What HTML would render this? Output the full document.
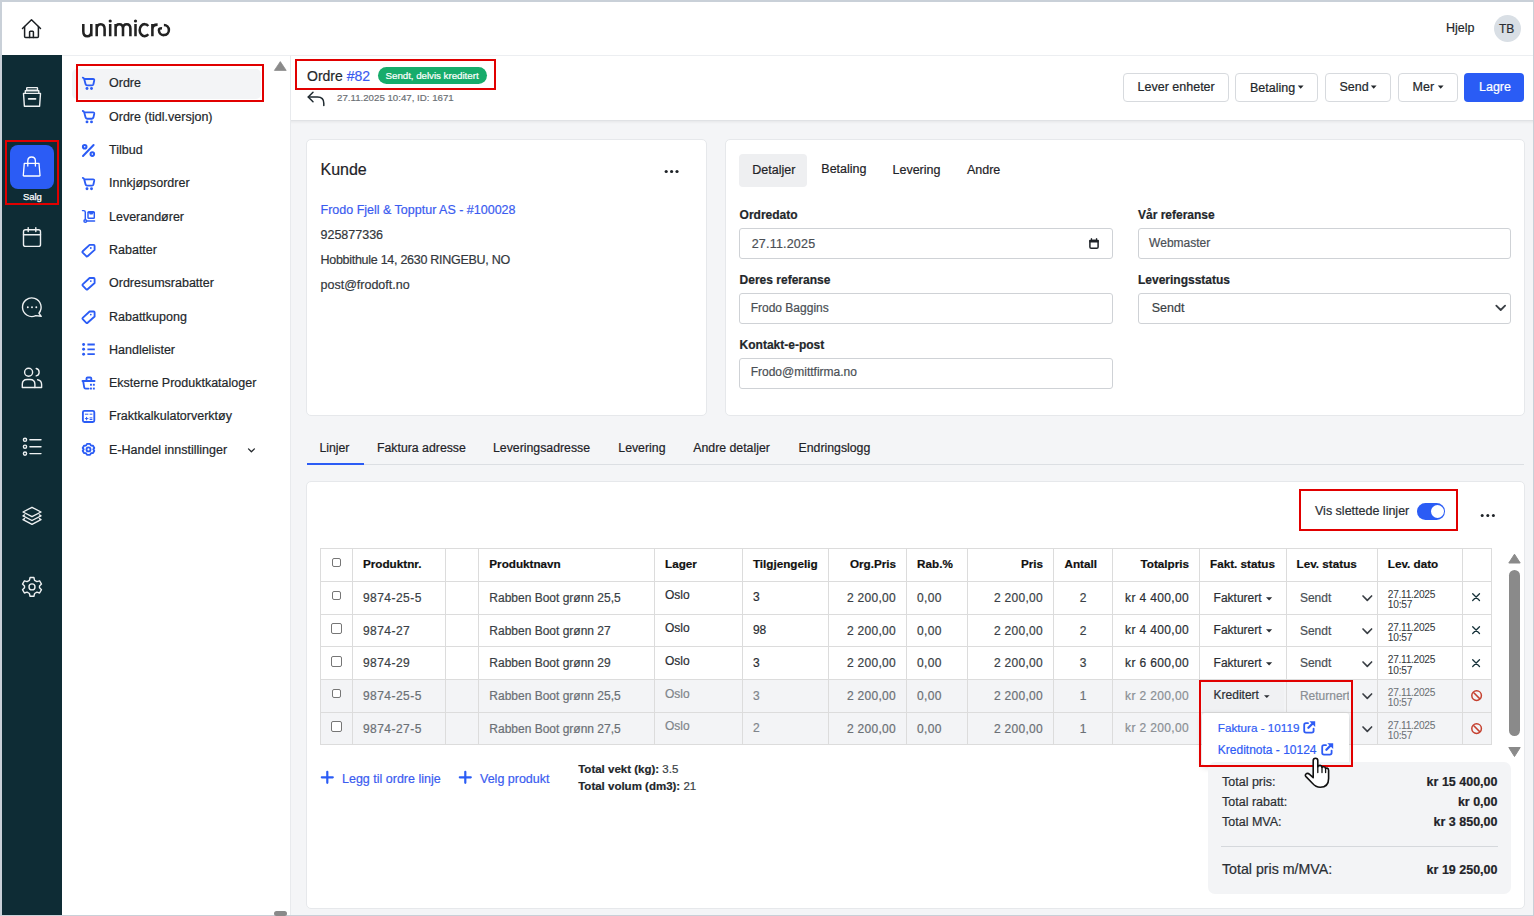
<!DOCTYPE html>
<html><head><meta charset="utf-8">
<style>
*{box-sizing:border-box;margin:0;padding:0}
html,body{width:1534px;height:916px;overflow:hidden;background:#c9d0d8;font-family:"Liberation Sans",sans-serif;color:#23272b}
.a{position:absolute}
#app{position:absolute;left:2px;top:2px;width:1531px;height:912.6px;background:#fff;overflow:hidden}
.t{position:absolute;white-space:nowrap;line-height:1;-webkit-text-stroke:0.2px currentColor}
.rb{position:absolute;border:2px solid #e10000;z-index:5}
svg{position:absolute;overflow:visible}
</style></head><body>
<!-- coordinates below are absolute page coordinates (body) -->
<div id="app"></div>

<!-- top header -->
<div class="a" style="left:2px;top:2px;width:1531px;height:54px;background:#fff;border-bottom:1px solid #eceef1"></div>
<svg style="left:22px;top:19px" width="20" height="20" viewBox="0 0 20 20" fill="none" stroke="#1b1f23" stroke-width="1.5" stroke-linejoin="round" stroke-linecap="round">
  <path d="M0.5 9.5 L9.5 0.8 L18.5 9.5"/><path d="M2.6 7.6 V17.4 Q2.6 18.4 3.6 18.4 H15.4 Q16.4 18.4 16.4 17.4 V7.6"/><path d="M7.6 18.4 V13 Q7.6 12.2 8.4 12.2 H10.6 Q11.4 12.2 11.4 13 V18.4"/>
</svg>
<svg style="left:78px;top:14px" width="100" height="30" viewBox="0 0 100 30" fill="none" stroke="#222" stroke-width="2.55">
<path d="M5.3 10 V17.2 Q5.3 22.2 9.3 22.2 Q13.3 22.2 13.3 17.2 M13.3 10 V22.2"/>
<path d="M18.7 22.2 V10 M18.7 15 Q18.7 10.2 22.7 10.2 Q26.6 10.2 26.6 15 V22.2"/>
<path d="M32.2 10 V22.2 M37.6 22.2 V10 M37.6 14.5 Q37.6 10.2 41.3 10.2 Q45 10.2 45 14.5 V22.2 M45 14.5 Q45 10.2 48.7 10.2 Q52.4 10.2 52.4 14.5 V22.2 M57.5 10 V22.2"/>
<path d="M70.3 12 A5 6 0 1 0 70.3 20.3"/>
<path d="M74.4 22.2 V10 M74.4 15.2 Q74.4 10.6 79.6 10.6"/>
<path d="M85.9 10.9 A5 5.1 0 1 1 80.9 16.2 Q80.9 14 84 14.4"/>
<circle cx="32.2" cy="7" r="1.6" fill="#222" stroke="none"/><circle cx="57.5" cy="7" r="1.6" fill="#222" stroke="none"/>
</svg>
<div class="t" style="left:1446px;top:22px;font-size:12.5px;color:#23272b">Hjelp</div>
<div class="a" style="left:1494px;top:15px;width:27px;height:27px;border-radius:50%;background:#d9dfe5"></div>
<div class="t" style="left:1499px;top:22.5px;font-size:12px;color:#2a2e33">TB</div>

<!-- dark sidebar -->
<div class="a" style="left:2px;top:55px;width:60px;height:859.6px;background:#0e2c35"></div>
<svg style="left:0;top:0" width="64" height="620" viewBox="0 0 64 620" fill="none" stroke="#eef1f2" stroke-width="1.4" stroke-linejoin="round" stroke-linecap="round">
 <rect x="26.7" y="87.6" width="10.8" height="2.6" rx="0.5"/>
 <path d="M25.3 93 V90.7 H38.8 V93"/>
 <path d="M23.5 93.4 H40.5 L39.6 106.3 H24.4 Z"/>
 <path d="M28.6 98.9 H35.6" stroke-width="1.6"/>
 <!-- calendar -->
 <rect x="23.5" y="229.8" width="17" height="16.6" rx="2"/>
 <path d="M23.5 234.8 H40.5 M28.2 227.6 V231.5 M35.8 227.6 V231.5"/>
 <!-- chat -->
 <path d="M38.9 313.2 A9.3 9.3 0 1 0 35.8 315.6 L41.2 316.3 Z"/>
 <circle cx="27.8" cy="307.2" r="0.95" fill="#eef1f2" stroke="none"/><circle cx="32" cy="307.2" r="0.95" fill="#eef1f2" stroke="none"/><circle cx="36.3" cy="307.2" r="0.95" fill="#eef1f2" stroke="none"/>
 <!-- people -->
<g transform="translate(0,0.9)"> <circle cx="28.6" cy="371.3" r="4"/>
 <path d="M36.2 367.6 A3.8 3.8 0 0 1 36.2 375"/>
 <path d="M22.3 386.6 V383.4 Q22.3 378.6 27.2 378.6 H30 Q34.9 378.6 34.9 383.4 V386.6 Z"/>
 <path d="M37.6 378.8 Q41.6 379.6 41.6 383.6 V386.6 H34.9"/></g>
 <!-- list -->
 <circle cx="25" cy="439.8" r="1.6"/><circle cx="25" cy="446.7" r="1.6"/><circle cx="25" cy="453.6" r="1.6"/>
 <path d="M29.9 439.8 H41 M29.9 446.7 H41 M29.9 453.6 H41"/>
 <!-- layers -->
 <path d="M32 507.3 L41 512 L32 516.7 L23 512 Z"/>
 <path d="M24.6 514.9 L23 515.8 L32 520.5 L41 515.8 L39.4 514.9"/>
 <path d="M24.6 518.7 L23 519.6 L32 524.3 L41 519.6 L39.4 518.7"/>
 <!-- gear -->
 <circle cx="32" cy="586.9" r="3"/>
 <path d="M30.1 577.5 H33.9 L34.6 580.3 L36.9 581.6 L39.6 580.8 L41.5 584.1 L39.5 586.1 V587.7 L41.5 589.7 L39.6 593 L36.9 592.2 L34.6 593.5 L33.9 596.3 H30.1 L29.4 593.5 L27.1 592.2 L24.4 593 L22.5 589.7 L24.5 587.7 V586.1 L22.5 584.1 L24.4 580.8 L27.1 581.6 L29.4 580.3 Z"/>
</svg>
<div class="a" style="left:10px;top:145px;width:44px;height:44px;border-radius:8px;background:#2b5cf5"></div>
<svg style="left:0;top:0" width="64" height="200" viewBox="0 0 64 200" fill="none" stroke="#fff" stroke-width="1.3" stroke-linejoin="round" stroke-linecap="round">
 <path d="M24.3 163.3 H39 L40 175.2 Q40.1 176 39.3 176 H24 Q23.2 176 23.3 175.2 Z"/>
 <path d="M27.8 166 V161 Q27.8 157 31.6 157 Q35.4 157 35.4 161 V166"/>
</svg>
<div class="t" style="left:23px;top:192px;font-size:9.5px;color:#fff;letter-spacing:-0.1px;-webkit-text-stroke:0.25px #fff">Salg</div>
<div class="rb" style="left:5px;top:140px;width:54px;height:65px"></div>

<!-- secondary menu -->
<div class="a" style="left:62px;top:55px;width:229px;height:859.6px;background:#fff;border-right:1px solid #e8eaed;border-top:1px solid #eceef1"></div>
<div class="a" style="left:72px;top:69px;width:189px;height:30px;border-radius:5px;background:#f3f4f6"></div>
<div class="t" style="left:109px;top:76.97px;font-size:12.5px;color:#23272b">Ordre</div>
<div class="t" style="left:109px;top:110.57px;font-size:12.5px;color:#23272b">Ordre (tidl.versjon)</div>
<div class="t" style="left:109px;top:143.67px;font-size:12.5px;color:#23272b">Tilbud</div>
<div class="t" style="left:109px;top:176.97px;font-size:12.5px;color:#23272b">Innkjøpsordrer</div>
<div class="t" style="left:109px;top:210.77px;font-size:12.5px;color:#23272b">Leverandører</div>
<div class="t" style="left:109px;top:243.97px;font-size:12.5px;color:#23272b">Rabatter</div>
<div class="t" style="left:109px;top:277.17px;font-size:12.5px;color:#23272b">Ordresumsrabatter</div>
<div class="t" style="left:109px;top:310.77px;font-size:12.5px;color:#23272b">Rabattkupong</div>
<div class="t" style="left:109px;top:343.87px;font-size:12.5px;color:#23272b">Handlelister</div>
<div class="t" style="left:109px;top:377.07px;font-size:12.5px;color:#23272b">Eksterne Produktkataloger</div>
<div class="t" style="left:109px;top:410.17px;font-size:12.5px;color:#23272b">Fraktkalkulatorverktøy</div>
<div class="t" style="left:109px;top:443.67px;font-size:12.5px;color:#23272b">E-Handel innstillinger</div>
<svg style="left:0;top:0" width="300" height="916" viewBox="0 0 300 916" fill="none" stroke="#2b5cf5" stroke-width="1.85" stroke-linejoin="round" stroke-linecap="round">
 <g id="cart"><path d="M82.8 77.6 Q83.9 77.8 84.2 79 L85.6 84.2 Q85.9 85.3 87 85.3 H92 Q93.1 85.3 93.4 84.2 L94.2 80.6 Q94.5 79 93 79 H84.4"/><circle cx="87" cy="88.5" r="1.45" fill="#2b5cf5" stroke="none"/><circle cx="91.5" cy="88.5" r="1.45" fill="#2b5cf5" stroke="none"/></g>
 <use href="#cart" transform="translate(0,33.4)"/>
 <use href="#cart" transform="translate(0,100.3)"/>
 <!-- percent -->
 <circle cx="84.7" cy="146.7" r="1.8" stroke-width="2"/><circle cx="92.3" cy="154.1" r="1.8" stroke-width="2"/><path d="M93.6 145 L83 156" stroke-width="2"/>
 <!-- trolley -->
 <g stroke-width="1.45"><path d="M82.5 210.6 H83.6 Q85.3 210.6 85.3 212.3 V219.6"/><circle cx="85.3" cy="221" r="1.35"/><path d="M86.8 221 H94.6"/>
 <rect x="88" y="211.7" width="6.3" height="6.5" rx="0.8"/><path d="M88.3 212.6 H94 M90 212.4 V213.8 H92.3 V212.4" stroke-width="1.3"/></g>
 <!-- tags -->
 <g id="tag"><path d="M89.6 244.9 H93.6 Q94.6 244.9 94.6 245.9 V249.9 L87.6 256.2 Q87 256.8 86.3 256.2 L82.7 252.6 Q82.1 251.9 82.7 251.3 Z"/><circle cx="90.8" cy="248" r="0.9" fill="#2b5cf5" stroke="none"/></g>
 <use href="#tag" transform="translate(0,33.1)"/>
 <use href="#tag" transform="translate(0,66.6)"/>
 <!-- list -->
 <circle cx="83.6" cy="344.5" r="1.45" fill="#2b5cf5" stroke="none"/><circle cx="83.6" cy="349.3" r="1.45" fill="#2b5cf5" stroke="none"/><circle cx="83.6" cy="354.2" r="1.45" fill="#2b5cf5" stroke="none"/>
 <path d="M87.4 344.5 H94.8 M87.4 349.3 H94.8 M87.4 354.2 H94.8" stroke-width="1.8" stroke-linecap="butt"/>
 <!-- basket -->
 <path d="M86.5 380.8 V378.6 Q86.5 377.5 87.6 377.5 H90.2 Q91.3 377.5 91.3 378.6 V380.8"/>
 <path d="M82.5 381 H94.6 M83.2 381.4 L84.2 387.4 Q84.4 388.6 85.6 388.6 H88.6"/>
 <rect x="90" y="383.8" width="1.9" height="1.9" fill="#2b5cf5" stroke="none"/><rect x="92.9" y="383.8" width="1.9" height="1.9" fill="#2b5cf5" stroke="none"/><rect x="90" y="387.6" width="1.9" height="1.9" fill="#2b5cf5" stroke="none"/><rect x="92.9" y="387.6" width="1.9" height="1.9" fill="#2b5cf5" stroke="none"/>
 <!-- calculator -->
 <rect x="82.9" y="410.8" width="11.4" height="11.2" rx="1.5"/>
 <path d="M85.3 414.2 H88 M90 414.2 H92 M85.3 418.6 H88 M86.6 417.3 V419.9 M90 417.9 H92 M90 419.5 H92" stroke-width="1"/>
 <!-- gear -->
 <circle cx="88.5" cy="449.4" r="2"/>
 <path d="M87 443.9 H90 L91 445.6 L93 445.7 L94.3 448 L93.3 449.4 L94.3 450.8 L93 453.1 L91 453.2 L90 454.9 H87 L86 453.2 L84 453.1 L82.7 450.8 L83.7 449.4 L82.7 448 L84 445.7 L86 445.6 Z"/>
 <path d="M248.5 448.9 L251.4 451.8 L254.4 448.9" stroke="#23272b" stroke-width="1.3"/>
</svg>
<svg style="left:274px;top:61px" width="13" height="10" viewBox="0 0 13 10"><path d="M6.3 0.6 L12.2 9.4 H0.4 Z" fill="#8a8a8a" stroke="#8a8a8a" stroke-width="0.8" stroke-linejoin="round"/></svg>
<div class="a" style="left:274px;top:911px;width:13px;height:5px;border-radius:3px;background:#8a8a8a"></div>
<div class="rb" style="left:76px;top:64px;width:188px;height:38px"></div>


<!-- page header -->
<div class="a" style="left:291px;top:56px;width:1242px;height:65px;background:#fff;border-bottom:1px solid #e0e2e5"></div>

<div class="rb" style="left:295px;top:59px;width:201px;height:31px"></div>
<div class="t" style="left:307px;top:69.27px;font-size:14px;color:#23272b;">Ordre <span style="color:#3b5bf0">#82</span></div>
<div class="a" style="left:378px;top:67px;width:109px;height:17px;border-radius:9px;background:#17ac6b"></div>
<div class="t" style="left:385.5px;top:71.12px;font-size:9.8px;color:#fff;letter-spacing:-0.05px">Sendt, delvis kreditert</div>
<div class="t" style="left:337px;top:92.93px;font-size:9.7px;color:#6b7075;">27.11.2025 10:47, ID: 1671</div>
<svg style="left:307px;top:91px" width="20" height="16" viewBox="0 0 20 16" fill="none" stroke="#1f2a30" stroke-width="1.5" stroke-linecap="round" stroke-linejoin="round"><path d="M6 1.2 L1.2 6 L6 10.8"/><path d="M1.4 6 H10.5 Q16.8 6 16.8 12.3 V14.4"/></svg>
<div class="a" style="left:1123px;top:73px;width:106px;height:29px;border:1px solid #d7dade;border-radius:4px;background:#fff"></div>
<div class="t" style="left:1137.6px;top:80.57px;font-size:12.5px;color:#23272b;">Lever enheter</div>
<div class="a" style="left:1235px;top:73px;width:83px;height:29px;border:1px solid #d7dade;border-radius:4px;background:#fff"></div>
<div class="t" style="left:1250px;top:81.57px;font-size:12.5px;color:#23272b;">Betaling</div>
<svg style="left:0;top:0" width="1534" height="120"><path d="M1297.8 85.4 h5.8 l-2.9 3.3 z" fill="#23272b"/></svg>
<div class="a" style="left:1325px;top:73px;width:66px;height:29px;border:1px solid #d7dade;border-radius:4px;background:#fff"></div>
<div class="t" style="left:1339.4px;top:80.57px;font-size:12.5px;color:#23272b;">Send</div>
<svg style="left:0;top:0" width="1534" height="120"><path d="M1370.8 85.4 h5.8 l-2.9 3.3 z" fill="#23272b"/></svg>
<div class="a" style="left:1398px;top:73px;width:60px;height:29px;border:1px solid #d7dade;border-radius:4px;background:#fff"></div>
<div class="t" style="left:1412.6px;top:80.57px;font-size:12.5px;color:#23272b;">Mer</div>
<svg style="left:0;top:0" width="1534" height="120"><path d="M1437.8 85.4 h5.8 l-2.9 3.3 z" fill="#23272b"/></svg>
<div class="a" style="left:1464px;top:73px;width:60px;height:29px;border-radius:4px;background:#2a5cf5"></div>
<div class="t" style="left:1479px;top:80.57px;font-size:12.5px;color:#fff;">Lagre</div>
<!-- content bg -->
<div class="a" style="left:291px;top:121px;width:1242px;height:793.6px;background:#f4f5f7"></div>
<div class="a" style="left:291px;top:121px;width:1242px;height:3px;background:linear-gradient(rgba(0,0,0,.05),rgba(0,0,0,0))"></div>

<!-- cards -->
<div class="a" style="left:306px;top:139px;width:401px;height:277px;background:#fff;border:1px solid #e6e8eb;border-radius:5px"></div>
<div class="a" style="left:725px;top:139px;width:800px;height:277px;background:#fff;border:1px solid #e6e8eb;border-radius:5px"></div>
<div class="a" style="left:306px;top:481px;width:1219px;height:428px;background:#fff;border:1px solid #e6e8eb;border-radius:5px"></div>
<!-- kunde card content -->
<div class="t" style="left:320.5px;top:161.51px;font-size:16px;color:#1f2328;">Kunde</div>
<svg style="left:664px;top:169px" width="16" height="5"><circle cx="2.2" cy="2.5" r="1.6" fill="#1f2328"/><circle cx="7.6" cy="2.5" r="1.6" fill="#1f2328"/><circle cx="13" cy="2.5" r="1.6" fill="#1f2328"/></svg>
<div class="t" style="left:320.5px;top:203.97px;font-size:12.5px;color:#3b5cf0;">Frodo Fjell &amp; Topptur AS - #100028</div>
<div class="t" style="left:320.5px;top:229.17px;font-size:12.5px;color:#33373c;">925877336</div>
<div class="t" style="left:320.5px;top:254.27px;font-size:12.5px;letter-spacing:-0.28px;color:#33373c;">Hobbithule 14, 2630 RINGEBU, NO</div>
<div class="t" style="left:320.5px;top:279.27px;font-size:12.5px;color:#33373c;">post@frodoft.no</div>

<!-- detaljer card -->
<div class="a" style="left:739px;top:154px;width:68px;height:33px;border-radius:4px;background:#eeeff1"></div>
<div class="t" style="left:752.3px;top:164.17px;font-size:12.5px;color:#1f2328;">Detaljer</div>
<div class="t" style="left:821.3px;top:163.17px;font-size:12.5px;color:#1f2328;">Betaling</div>
<div class="t" style="left:892.5px;top:164.17px;font-size:12.5px;color:#1f2328;">Levering</div>
<div class="t" style="left:966.9px;top:164.17px;font-size:12.5px;color:#1f2328;">Andre</div>
<div class="t" style="left:739.6px;top:209.13px;font-size:12px;color:#23272b;font-weight:bold">Ordredato</div>
<div class="t" style="left:739.6px;top:274.03px;font-size:12px;color:#23272b;font-weight:bold">Deres referanse</div>
<div class="t" style="left:739.6px;top:338.93px;font-size:12px;color:#23272b;font-weight:bold">Kontakt-e-post</div>
<div class="t" style="left:1138px;top:209.13px;font-size:12px;color:#23272b;font-weight:bold">Vår referanse</div>
<div class="t" style="left:1138px;top:274.03px;font-size:12px;color:#23272b;font-weight:bold">Leveringsstatus</div>
<div class="a" style="left:739px;top:228px;width:374px;height:31px;border:1px solid #cfd2d6;border-radius:3px;background:#fff"></div>
<div class="a" style="left:739px;top:293px;width:374px;height:31px;border:1px solid #cfd2d6;border-radius:3px;background:#fff"></div>
<div class="a" style="left:739px;top:358px;width:374px;height:31px;border:1px solid #cfd2d6;border-radius:3px;background:#fff"></div>
<div class="a" style="left:1138px;top:228px;width:373px;height:31px;border:1px solid #cfd2d6;border-radius:3px;background:#fff"></div>
<div class="a" style="left:1138px;top:293px;width:373px;height:31px;border:1px solid #cfd2d6;border-radius:3px;background:#fff"></div>
<div class="t" style="left:751.7px;top:237.57px;font-size:12.5px;color:#4a4f55;letter-spacing:0.2px">27.11.2025</div>
<div class="t" style="left:750.7px;top:301.63px;font-size:12px;color:#4a4f55;">Frodo Baggins</div>
<div class="t" style="left:750.7px;top:366.43px;font-size:12px;color:#4a4f55;">Frodo@mittfirma.no</div>
<div class="t" style="left:1149.1px;top:237.03px;font-size:12px;color:#4a4f55;">Webmaster</div>
<div class="t" style="left:1151.7px;top:301.57px;font-size:12.5px;color:#3a3f45;">Sendt</div>
<svg style="left:0;top:0" width="1534" height="400" fill="none">
 <rect x="1089.9" y="240.4" width="8.2" height="7.8" rx="1.3" stroke="#1f2328" stroke-width="1.5"/><rect x="1089.2" y="239.8" width="9.6" height="2.6" rx="0.8" fill="#1f2328"/><rect x="1090.8" y="238.2" width="1.3" height="2" fill="#1f2328"/><rect x="1095.9" y="238.2" width="1.3" height="2" fill="#1f2328"/>
 <path d="M1496.3 305.6 L1500.7 310 L1505.1 305.6" stroke="#3a3f45" stroke-width="1.8" stroke-linecap="round" stroke-linejoin="round"/>
</svg>


<!--TABLE-->

<!-- lower tabs -->
<div class="t" style="left:319.40px;top:441.89px;font-size:12.3px;color:#1f2328;">Linjer</div>
<div class="t" style="left:377.00px;top:441.89px;font-size:12.3px;color:#1f2328;">Faktura adresse</div>
<div class="t" style="left:493.00px;top:441.89px;font-size:12.3px;color:#1f2328;">Leveringsadresse</div>
<div class="t" style="left:618.30px;top:441.89px;font-size:12.3px;color:#1f2328;">Levering</div>
<div class="t" style="left:693.30px;top:441.89px;font-size:12.3px;color:#1f2328;">Andre detaljer</div>
<div class="t" style="left:798.50px;top:441.89px;font-size:12.3px;color:#1f2328;">Endringslogg</div>
<div class="a" style="left:307px;top:464px;width:1217px;height:1px;background:#dcdfe3"></div>
<div class="a" style="left:307px;top:463px;width:57px;height:2px;background:#2b5cf5"></div>

<!-- toggle -->
<div class="t" style="left:1315.00px;top:504.87px;font-size:12.5px;color:#2a2e33;">Vis slettede linjer</div>
<div class="a" style="left:1417px;top:503px;width:28px;height:17px;border-radius:9px;background:#2b5cf5"></div>
<div class="a" style="left:1431px;top:505px;width:13px;height:13px;border-radius:50%;background:#fff"></div>
<div class="rb" style="left:1299px;top:489px;width:159px;height:42px"></div>
<svg style="left:1480px;top:513px" width="16" height="5"><circle cx="2.2" cy="2.5" r="1.5" fill="#1f2328"/><circle cx="7.8" cy="2.5" r="1.5" fill="#1f2328"/><circle cx="13.4" cy="2.5" r="1.5" fill="#1f2328"/></svg>

<!-- table -->
<div class="a" style="left:320px;top:679px;width:1171px;height:65px;background:#f3f4f6"></div>
<svg style="left:0;top:0" width="1534" height="916" shape-rendering="crispEdges"><rect x="320" y="548" width="1" height="197" fill="#dcdcdc"/><rect x="352" y="548" width="1" height="197" fill="#dcdcdc"/><rect x="445" y="548" width="1" height="197" fill="#dcdcdc"/><rect x="478" y="548" width="1" height="197" fill="#dcdcdc"/><rect x="654" y="548" width="1" height="197" fill="#dcdcdc"/><rect x="742" y="548" width="1" height="197" fill="#dcdcdc"/><rect x="828" y="548" width="1" height="197" fill="#dcdcdc"/><rect x="906" y="548" width="1" height="197" fill="#dcdcdc"/><rect x="967" y="548" width="1" height="197" fill="#dcdcdc"/><rect x="1053" y="548" width="1" height="197" fill="#dcdcdc"/><rect x="1112" y="548" width="1" height="197" fill="#dcdcdc"/><rect x="1199" y="548" width="1" height="197" fill="#dcdcdc"/><rect x="1286" y="548" width="1" height="197" fill="#dcdcdc"/><rect x="1377" y="548" width="1" height="197" fill="#dcdcdc"/><rect x="1462" y="548" width="1" height="197" fill="#dcdcdc"/><rect x="1491" y="548" width="1" height="197" fill="#dcdcdc"/><rect x="320" y="548" width="1172" height="1" fill="#dcdcdc"/><rect x="320" y="581" width="1172" height="1" fill="#dcdcdc"/><rect x="320" y="614" width="1172" height="1" fill="#dcdcdc"/><rect x="320" y="646" width="1172" height="1" fill="#dcdcdc"/><rect x="320" y="679" width="1172" height="1" fill="#dcdcdc"/><rect x="320" y="712" width="1172" height="1" fill="#dcdcdc"/><rect x="320" y="744" width="1172" height="1" fill="#dcdcdc"/></svg>
<div class="a" style="left:332px;top:558px;width:9px;height:9px;border:1px solid #767676;border-radius:2px;background:#fff"></div>
<div class="a" style="left:332px;top:591px;width:9px;height:9px;border:1px solid #767676;border-radius:2px;background:#fff"></div>
<div class="a" style="left:331px;top:623px;width:10.5px;height:10.5px;border:1px solid #767676;border-radius:2px;background:#fff"></div>
<div class="a" style="left:331px;top:656px;width:10.5px;height:10.5px;border:1px solid #767676;border-radius:2px;background:#fff"></div>
<div class="a" style="left:332px;top:689px;width:9px;height:9px;border:1px solid #767676;border-radius:2px;background:#fff"></div>
<div class="a" style="left:331px;top:721.4px;width:10.5px;height:10.5px;border:1px solid #767676;border-radius:2px;background:#fff"></div>
<div class="t" style="left:363.00px;top:557.97px;font-size:11.7px;color:#111;font-weight:bold">Produktnr.</div>
<div class="t" style="left:489.30px;top:557.97px;font-size:11.7px;color:#111;font-weight:bold">Produktnavn</div>
<div class="t" style="left:665.10px;top:557.97px;font-size:11.7px;color:#111;font-weight:bold">Lager</div>
<div class="t" style="left:752.90px;top:557.97px;font-size:11.7px;color:#111;font-weight:bold">Tilgjengelig</div>
<div class="t" style="right:638.00px;top:557.97px;font-size:11.7px;color:#111;text-align:right;font-weight:bold">Org.Pris</div>
<div class="t" style="left:917.10px;top:557.97px;font-size:11.7px;color:#111;font-weight:bold">Rab.%</div>
<div class="t" style="right:491.00px;top:557.97px;font-size:11.7px;color:#111;text-align:right;font-weight:bold">Pris</div>
<div class="t" style="left:1064.50px;top:557.97px;font-size:11.7px;color:#111;font-weight:bold">Antall</div>
<div class="t" style="right:345.00px;top:557.97px;font-size:11.7px;color:#111;text-align:right;font-weight:bold">Totalpris</div>
<div class="t" style="left:1210.00px;top:557.97px;font-size:11.7px;color:#111;font-weight:bold">Fakt. status</div>
<div class="t" style="left:1296.60px;top:557.97px;font-size:11.7px;color:#111;font-weight:bold">Lev. status</div>
<div class="t" style="left:1387.80px;top:557.97px;font-size:11.7px;color:#111;font-weight:bold">Lev. dato</div>
<div class="t" style="left:363.00px;top:592.03px;font-size:12px;color:#3a3f45;letter-spacing:0.45px">9874-25-5</div>
<div class="t" style="left:489.30px;top:592.03px;font-size:12px;color:#3a3f45;">Rabben Boot grønn 25,5</div>
<div class="t" style="left:665.00px;top:589.43px;font-size:12px;color:#2a2e33;">Oslo</div>
<div class="t" style="left:752.90px;top:591.43px;font-size:12px;color:#2a2e33;">3</div>
<div class="t" style="right:638.00px;top:592.03px;font-size:12px;color:#3a3f45;text-align:right;letter-spacing:0.3px">2 200,00</div>
<div class="t" style="left:917.10px;top:592.03px;font-size:12px;color:#3a3f45;letter-spacing:0.3px">0,00</div>
<div class="t" style="right:491.00px;top:592.03px;font-size:12px;color:#3a3f45;text-align:right;letter-spacing:0.3px">2 200,00</div>
<div class="t" style="left:1033.00px;width:100px;text-align:center;top:592.03px;font-size:12px;color:#3a3f45;">2</div>
<div class="t" style="right:345.00px;top:591.53px;font-size:12px;color:#2a2e33;text-align:right;letter-spacing:0.35px">kr 4 400,00</div>
<div class="t" style="left:1387.80px;top:590.07px;font-size:10.2px;color:#33383d;letter-spacing:-0.3px;-webkit-text-stroke:0.05px currentColor">27.11.2025</div>
<div class="t" style="left:1387.80px;top:600.37px;font-size:10.2px;color:#33383d;letter-spacing:-0.2px;-webkit-text-stroke:0.05px currentColor">10:57</div>
<div class="t" style="left:1213.60px;top:591.53px;font-size:12px;color:#2a2e33;">Fakturert</div>
<svg style="left:1265.8px;top:596.7px" width="7" height="5"><path d="M0 0.3 h6.2 l-3.1 3.1 z" fill="#2a2e33"/></svg>
<div class="t" style="left:1299.90px;top:592.03px;font-size:12px;color:#4a4f55;">Sendt</div>
<svg style="left:1472.2px;top:593.4px" width="10" height="10" fill="none" stroke="#16323a" stroke-width="1.3" stroke-linecap="round"><path d="M0.7 0.7 L7.5 7.5 M7.5 0.7 L0.7 7.5"/></svg>
<svg style="left:1362px;top:595.2px" width="12" height="8" fill="none" stroke="#3a3f45" stroke-width="1.65" stroke-linecap="round" stroke-linejoin="round"><path d="M1 1 L5.3 5.3 L9.6 1"/></svg>
<div class="t" style="left:363.00px;top:624.73px;font-size:12px;color:#3a3f45;letter-spacing:0.45px">9874-27</div>
<div class="t" style="left:489.30px;top:624.73px;font-size:12px;color:#3a3f45;">Rabben Boot grønn 27</div>
<div class="t" style="left:665.00px;top:622.13px;font-size:12px;color:#2a2e33;">Oslo</div>
<div class="t" style="left:752.90px;top:624.13px;font-size:12px;color:#2a2e33;">98</div>
<div class="t" style="right:638.00px;top:624.73px;font-size:12px;color:#3a3f45;text-align:right;letter-spacing:0.3px">2 200,00</div>
<div class="t" style="left:917.10px;top:624.73px;font-size:12px;color:#3a3f45;letter-spacing:0.3px">0,00</div>
<div class="t" style="right:491.00px;top:624.73px;font-size:12px;color:#3a3f45;text-align:right;letter-spacing:0.3px">2 200,00</div>
<div class="t" style="left:1033.00px;width:100px;text-align:center;top:624.73px;font-size:12px;color:#3a3f45;">2</div>
<div class="t" style="right:345.00px;top:624.23px;font-size:12px;color:#2a2e33;text-align:right;letter-spacing:0.35px">kr 4 400,00</div>
<div class="t" style="left:1387.80px;top:622.77px;font-size:10.2px;color:#33383d;letter-spacing:-0.3px;-webkit-text-stroke:0.05px currentColor">27.11.2025</div>
<div class="t" style="left:1387.80px;top:633.07px;font-size:10.2px;color:#33383d;letter-spacing:-0.2px;-webkit-text-stroke:0.05px currentColor">10:57</div>
<div class="t" style="left:1213.60px;top:624.23px;font-size:12px;color:#2a2e33;">Fakturert</div>
<svg style="left:1265.8px;top:629.4px" width="7" height="5"><path d="M0 0.3 h6.2 l-3.1 3.1 z" fill="#2a2e33"/></svg>
<div class="t" style="left:1299.90px;top:624.73px;font-size:12px;color:#4a4f55;">Sendt</div>
<svg style="left:1472.2px;top:626.1px" width="10" height="10" fill="none" stroke="#16323a" stroke-width="1.3" stroke-linecap="round"><path d="M0.7 0.7 L7.5 7.5 M7.5 0.7 L0.7 7.5"/></svg>
<svg style="left:1362px;top:627.9px" width="12" height="8" fill="none" stroke="#3a3f45" stroke-width="1.65" stroke-linecap="round" stroke-linejoin="round"><path d="M1 1 L5.3 5.3 L9.6 1"/></svg>
<div class="t" style="left:363.00px;top:657.43px;font-size:12px;color:#3a3f45;letter-spacing:0.45px">9874-29</div>
<div class="t" style="left:489.30px;top:657.43px;font-size:12px;color:#3a3f45;">Rabben Boot grønn 29</div>
<div class="t" style="left:665.00px;top:654.83px;font-size:12px;color:#2a2e33;">Oslo</div>
<div class="t" style="left:752.90px;top:656.83px;font-size:12px;color:#2a2e33;">3</div>
<div class="t" style="right:638.00px;top:657.43px;font-size:12px;color:#3a3f45;text-align:right;letter-spacing:0.3px">2 200,00</div>
<div class="t" style="left:917.10px;top:657.43px;font-size:12px;color:#3a3f45;letter-spacing:0.3px">0,00</div>
<div class="t" style="right:491.00px;top:657.43px;font-size:12px;color:#3a3f45;text-align:right;letter-spacing:0.3px">2 200,00</div>
<div class="t" style="left:1033.00px;width:100px;text-align:center;top:657.43px;font-size:12px;color:#3a3f45;">3</div>
<div class="t" style="right:345.00px;top:656.93px;font-size:12px;color:#2a2e33;text-align:right;letter-spacing:0.35px">kr 6 600,00</div>
<div class="t" style="left:1387.80px;top:655.47px;font-size:10.2px;color:#33383d;letter-spacing:-0.3px;-webkit-text-stroke:0.05px currentColor">27.11.2025</div>
<div class="t" style="left:1387.80px;top:665.77px;font-size:10.2px;color:#33383d;letter-spacing:-0.2px;-webkit-text-stroke:0.05px currentColor">10:57</div>
<div class="t" style="left:1213.60px;top:656.93px;font-size:12px;color:#2a2e33;">Fakturert</div>
<svg style="left:1265.8px;top:662.1px" width="7" height="5"><path d="M0 0.3 h6.2 l-3.1 3.1 z" fill="#2a2e33"/></svg>
<div class="t" style="left:1299.90px;top:657.43px;font-size:12px;color:#4a4f55;">Sendt</div>
<svg style="left:1472.2px;top:658.8px" width="10" height="10" fill="none" stroke="#16323a" stroke-width="1.3" stroke-linecap="round"><path d="M0.7 0.7 L7.5 7.5 M7.5 0.7 L0.7 7.5"/></svg>
<svg style="left:1362px;top:660.6px" width="12" height="8" fill="none" stroke="#3a3f45" stroke-width="1.65" stroke-linecap="round" stroke-linejoin="round"><path d="M1 1 L5.3 5.3 L9.6 1"/></svg>
<div class="t" style="left:363.00px;top:690.13px;font-size:12px;color:#6b7075;letter-spacing:0.45px">9874-25-5</div>
<div class="t" style="left:489.30px;top:690.13px;font-size:12px;color:#6b7075;">Rabben Boot grønn 25,5</div>
<div class="t" style="left:665.00px;top:687.53px;font-size:12px;color:#80858a;">Oslo</div>
<div class="t" style="left:752.90px;top:689.53px;font-size:12px;color:#80858a;">3</div>
<div class="t" style="right:638.00px;top:690.13px;font-size:12px;color:#6b7075;text-align:right;letter-spacing:0.3px">2 200,00</div>
<div class="t" style="left:917.10px;top:690.13px;font-size:12px;color:#6b7075;letter-spacing:0.3px">0,00</div>
<div class="t" style="right:491.00px;top:690.13px;font-size:12px;color:#6b7075;text-align:right;letter-spacing:0.3px">2 200,00</div>
<div class="t" style="left:1033.00px;width:100px;text-align:center;top:690.13px;font-size:12px;color:#6b7075;">1</div>
<div class="t" style="right:345.00px;top:689.63px;font-size:12px;color:#8a8f94;text-align:right;letter-spacing:0.35px">kr 2 200,00</div>
<div class="t" style="left:1387.80px;top:688.17px;font-size:10.2px;color:#6b7075;letter-spacing:-0.3px;-webkit-text-stroke:0.05px currentColor">27.11.2025</div>
<div class="t" style="left:1387.80px;top:698.47px;font-size:10.2px;color:#6b7075;letter-spacing:-0.2px;-webkit-text-stroke:0.05px currentColor">10:57</div>
<svg style="left:1470.5px;top:690.1px" width="12" height="12" fill="none" stroke="#c5402f" stroke-width="1.5"><circle cx="5.6" cy="5.6" r="4.8"/><path d="M2.3 2.3 L8.9 8.9"/></svg>
<svg style="left:1362px;top:693.3px" width="12" height="8" fill="none" stroke="#3a3f45" stroke-width="1.65" stroke-linecap="round" stroke-linejoin="round"><path d="M1 1 L5.3 5.3 L9.6 1"/></svg>
<div class="t" style="left:363.00px;top:722.83px;font-size:12px;color:#6b7075;letter-spacing:0.45px">9874-27-5</div>
<div class="t" style="left:489.30px;top:722.83px;font-size:12px;color:#6b7075;">Rabben Boot grønn 27,5</div>
<div class="t" style="left:665.00px;top:720.23px;font-size:12px;color:#80858a;">Oslo</div>
<div class="t" style="left:752.90px;top:722.23px;font-size:12px;color:#80858a;">2</div>
<div class="t" style="right:638.00px;top:722.83px;font-size:12px;color:#6b7075;text-align:right;letter-spacing:0.3px">2 200,00</div>
<div class="t" style="left:917.10px;top:722.83px;font-size:12px;color:#6b7075;letter-spacing:0.3px">0,00</div>
<div class="t" style="right:491.00px;top:722.83px;font-size:12px;color:#6b7075;text-align:right;letter-spacing:0.3px">2 200,00</div>
<div class="t" style="left:1033.00px;width:100px;text-align:center;top:722.83px;font-size:12px;color:#6b7075;">1</div>
<div class="t" style="right:345.00px;top:722.33px;font-size:12px;color:#8a8f94;text-align:right;letter-spacing:0.35px">kr 2 200,00</div>
<div class="t" style="left:1387.80px;top:720.87px;font-size:10.2px;color:#6b7075;letter-spacing:-0.3px;-webkit-text-stroke:0.05px currentColor">27.11.2025</div>
<div class="t" style="left:1387.80px;top:731.17px;font-size:10.2px;color:#6b7075;letter-spacing:-0.2px;-webkit-text-stroke:0.05px currentColor">10:57</div>
<svg style="left:1470.5px;top:722.8px" width="12" height="12" fill="none" stroke="#c5402f" stroke-width="1.5"><circle cx="5.6" cy="5.6" r="4.8"/><path d="M2.3 2.3 L8.9 8.9"/></svg>
<svg style="left:1362px;top:726.0px" width="12" height="8" fill="none" stroke="#3a3f45" stroke-width="1.65" stroke-linecap="round" stroke-linejoin="round"><path d="M1 1 L5.3 5.3 L9.6 1"/></svg>
<div class="a" style="left:1202px;top:681px;width:82px;height:31px;background:#f0f1f3"></div>
<div class="t" style="left:1213.60px;top:689.03px;font-size:12px;color:#2a2e33;">Kreditert</div>
<svg style="left:1264px;top:695.1px" width="6" height="4"><path d="M0 0.3 h5.6 l-2.8 2.8 z" fill="#2a2e33"/></svg>
<div class="t" style="left:1299.9px;top:689.53px;font-size:12px;color:#8a8f94;width:49px;overflow:hidden">Returnert</div>
<div class="a" style="left:1202px;top:713px;width:147px;height:52px;background:#fff;border-radius:3px;box-shadow:0 2px 6px rgba(0,0,0,.18)"></div>
<div class="t" style="left:1217.80px;top:722.47px;font-size:11.7px;color:#2f5cf5;">Faktura - 10119</div>
<div class="t" style="left:1217.80px;top:744.43px;font-size:12px;color:#2f5cf5;">Kreditnota - 10124</div>
<svg style="left:1303px;top:721px" width="13" height="13" fill="none" stroke="#2f5cf5" stroke-width="1.8" stroke-linecap="round" stroke-linejoin="round"><path d="M5 2.2 H3 Q1.2 2.2 1.2 4 V9.8 Q1.2 11.6 3 11.6 H8.8 Q10.6 11.6 10.6 9.8 V7.6"/><path d="M6.4 0.2 H12.2 V6 Z" fill="#2f5cf5" stroke="none"/><path d="M5.4 6.8 L9.4 2.8" stroke-width="2.3"/></svg>
<svg style="left:1321.4px;top:743px" width="13" height="13" fill="none" stroke="#2f5cf5" stroke-width="1.8" stroke-linecap="round" stroke-linejoin="round"><path d="M5 2.2 H3 Q1.2 2.2 1.2 4 V9.8 Q1.2 11.6 3 11.6 H8.8 Q10.6 11.6 10.6 9.8 V7.6"/><path d="M6.4 0.2 H12.2 V6 Z" fill="#2f5cf5" stroke="none"/><path d="M5.4 6.8 L9.4 2.8" stroke-width="2.3"/></svg>
<div class="rb" style="left:1199px;top:680px;width:154px;height:87px"></div>
<svg style="left:1507px;top:553px" width="16" height="206"><path d="M7.5 1.2 L13.2 10 H1.8 Z" fill="#8a8a8a" stroke="#8a8a8a" stroke-width="1" stroke-linejoin="round"/><rect x="2" y="17" width="11" height="166" rx="5.5" fill="#8a8a8a"/><path d="M7.5 203.5 L13.2 194.5 H1.8 Z" fill="#8a8a8a" stroke="#8a8a8a" stroke-width="1" stroke-linejoin="round"/></svg>
<svg style="left:321px;top:771px" width="13" height="13" fill="none" stroke="#2b5cf5" stroke-width="2.2" stroke-linecap="round"><path d="M6.3 0.8 V11.8 M0.8 6.3 H11.8"/></svg>
<svg style="left:459.2px;top:771px" width="13" height="13" fill="none" stroke="#2b5cf5" stroke-width="2.2" stroke-linecap="round"><path d="M6.3 0.8 V11.8 M0.8 6.3 H11.8"/></svg>
<div class="t" style="left:342.00px;top:772.77px;font-size:12.5px;color:#3b5cf0;">Legg til ordre linje</div>
<div class="t" style="left:480.00px;top:772.77px;font-size:12.5px;color:#3b5cf0;">Velg produkt</div>
<div class="t" style="left:578.20px;top:764.00px;font-size:11.5px;color:#3a3f45;"><b style="color:#23272b">Total vekt (kg):</b> 3.5</div>
<div class="t" style="left:578.20px;top:780.90px;font-size:11.5px;color:#3a3f45;"><b style="color:#23272b">Total volum (dm3):</b> 21</div>
<div class="a" style="left:1208px;top:762px;width:303px;height:132px;border-radius:7px;background:#f3f4f6"></div>
<div class="a" style="left:1221px;top:846px;width:277px;height:1px;background:#d5d8dc"></div>
<div class="t" style="left:1222.00px;top:775.97px;font-size:12.5px;color:#2a2e33;">Total pris:</div>
<div class="t" style="right:36.50px;top:775.97px;font-size:12.5px;color:#1f2328;text-align:right;font-weight:bold">kr 15 400,00</div>
<div class="t" style="left:1222.00px;top:796.17px;font-size:12.5px;color:#2a2e33;">Total rabatt:</div>
<div class="t" style="right:36.50px;top:796.17px;font-size:12.5px;color:#1f2328;text-align:right;font-weight:bold">kr 0,00</div>
<div class="t" style="left:1222.00px;top:816.37px;font-size:12.5px;color:#2a2e33;">Total MVA:</div>
<div class="t" style="right:36.50px;top:816.37px;font-size:12.5px;color:#1f2328;text-align:right;font-weight:bold">kr 3 850,00</div>
<div class="t" style="left:1222.00px;top:862.15px;font-size:14.2px;color:#2a2e33;">Total pris m/MVA:</div>
<div class="t" style="right:36.50px;top:863.87px;font-size:12.5px;color:#1f2328;text-align:right;font-weight:bold">kr 19 250,00</div>
<svg style="left:1300px;top:756px;z-index:6" width="34" height="36" viewBox="0 0 34 36">
<path d="M13.2 4.6 Q13.2 2.3 15.5 2.3 Q17.8 2.3 17.8 4.6 V10.8 Q18.2 9.4 20 9.4 Q21.8 9.5 22 11.4 Q22.4 10.6 23.8 10.8 Q25.4 11 25.6 12.6 Q26 12 27.1 12.1 Q28.6 12.4 28.6 14.2 V22.5 Q28.6 31.2 20.2 31.2 Q15.8 31.2 12.4 27.2 L6 20.6 Q4.6 19 6.2 17.8 Q7.8 16.8 9.6 18.4 L13.2 21.6 Z" fill="#fff" stroke="#111" stroke-width="1.6" stroke-linejoin="round"/>
<path d="M17.8 10.8 V16.6 M22 11.4 V16.6 M25.6 12.6 V16.6" stroke="#111" stroke-width="1.3" fill="none" stroke-linecap="round"/>
</svg>
<!--/TABLE-->
</body></html>
